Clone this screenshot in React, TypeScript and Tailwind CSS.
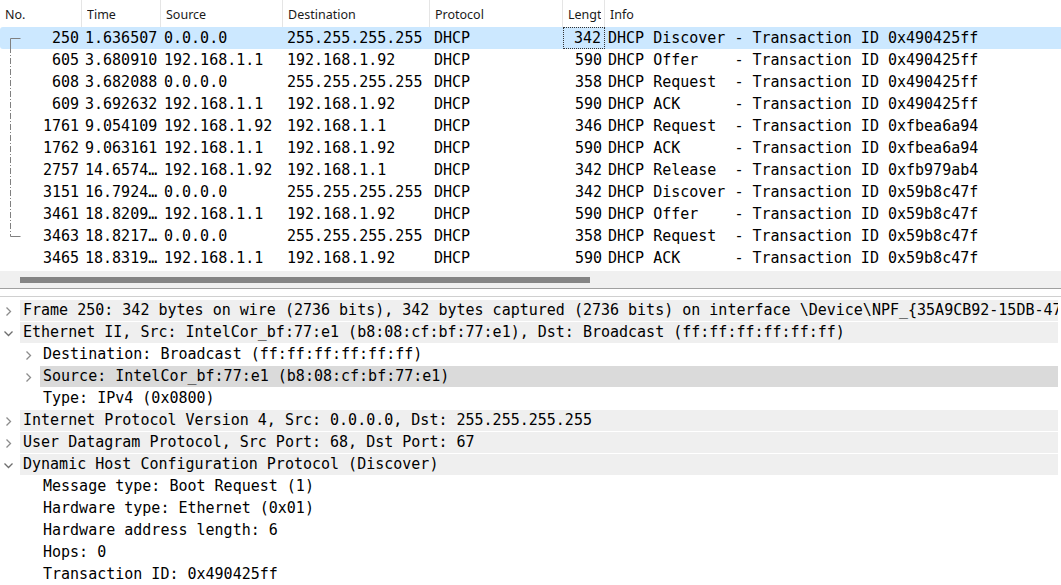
import React from 'react';

const COLS = 'grid grid-cols-[82px_79px_122px_147px_133px_42px_1fr]';

const PACKETS = [
  ['250', '1.636507', '0.0.0.0', '255.255.255.255', '342', 'Discover', '0x490425ff'],
  ['605', '3.680910', '192.168.1.1', '192.168.1.92', '590', 'Offer', '0x490425ff'],
  ['608', '3.682088', '0.0.0.0', '255.255.255.255', '358', 'Request', '0x490425ff'],
  ['609', '3.692632', '192.168.1.1', '192.168.1.92', '590', 'ACK', '0x490425ff'],
  ['1761', '9.054109', '192.168.1.92', '192.168.1.1', '346', 'Request', '0xfbea6a94'],
  ['1762', '9.063161', '192.168.1.1', '192.168.1.92', '590', 'ACK', '0xfbea6a94'],
  ['2757', '14.6574…', '192.168.1.92', '192.168.1.1', '342', 'Release', '0xfb979ab4'],
  ['3151', '16.7924…', '0.0.0.0', '255.255.255.255', '342', 'Discover', '0x59b8c47f'],
  ['3461', '18.8209…', '192.168.1.1', '192.168.1.92', '590', 'Offer', '0x59b8c47f'],
  ['3463', '18.8217…', '0.0.0.0', '255.255.255.255', '358', 'Request', '0x59b8c47f'],
  ['3465', '18.8319…', '192.168.1.1', '192.168.1.92', '590', 'ACK', '0x59b8c47f'],
];

// level 0 = top protocol row, 1 = child. arrow: 'r' | 'd' | null
type Node = { text: string; level: 0 | 1; arrow: 'r' | 'd' | null; sel?: boolean };

const DETAILS: Node[] = [
  { text: 'Frame 250: 342 bytes on wire (2736 bits), 342 bytes captured (2736 bits) on interface \\Device\\NPF_{35A9CB92-15DB-47E1-9A2D-1B4C7F0E3A21}, id 0', level: 0, arrow: 'r' },
  { text: 'Ethernet II, Src: IntelCor_bf:77:e1 (b8:08:cf:bf:77:e1), Dst: Broadcast (ff:ff:ff:ff:ff:ff)', level: 0, arrow: 'd' },
  { text: 'Destination: Broadcast (ff:ff:ff:ff:ff:ff)', level: 1, arrow: 'r' },
  { text: 'Source: IntelCor_bf:77:e1 (b8:08:cf:bf:77:e1)', level: 1, arrow: 'r', sel: true },
  { text: 'Type: IPv4 (0x0800)', level: 1, arrow: null },
  { text: 'Internet Protocol Version 4, Src: 0.0.0.0, Dst: 255.255.255.255', level: 0, arrow: 'r' },
  { text: 'User Datagram Protocol, Src Port: 68, Dst Port: 67', level: 0, arrow: 'r' },
  { text: 'Dynamic Host Configuration Protocol (Discover)', level: 0, arrow: 'd' },
  { text: 'Message type: Boot Request (1)', level: 1, arrow: null },
  { text: 'Hardware type: Ethernet (0x01)', level: 1, arrow: null },
  { text: 'Hardware address length: 6', level: 1, arrow: null },
  { text: 'Hops: 0', level: 1, arrow: null },
  { text: 'Transaction ID: 0x490425ff', level: 1, arrow: null },
];

const Chevron = ({ dir }: { dir: 'r' | 'd' }) =>
  dir === 'r' ? (
    <svg width="7" height="11" viewBox="0 0 7 11" className="block">
      <path d="M1.5 1.5 L5.5 5.5 L1.5 9.5" fill="none" stroke="#8c8c8c" strokeWidth="1.3" />
    </svg>
  ) : (
    <svg width="11" height="7" viewBox="0 0 11 7" className="block">
      <path d="M1.5 1.5 L5.5 5.5 L9.5 1.5" fill="none" stroke="#6e6e6e" strokeWidth="1.3" />
    </svg>
  );

const HEADERS = ['No.', 'Time', 'Source', 'Destination', 'Protocol', 'Length', 'Info'];

export default function App() {
  return (
    <div className="w-[1061px] h-[585px] overflow-hidden bg-white text-black">
      {/* packet list header */}
      <div className={`${COLS} h-[27px] font-['Noto_Sans',sans-serif] text-[12.5px] text-[#1a1a1a]`}>
        {HEADERS.map((h, i) => (
          <div key={h} className={`flex items-center pt-[3px] pl-[5px] border-[#e5e5e5] ${i < 6 ? 'border-r' : ''}`}>
            <span className={`block overflow-hidden whitespace-nowrap ${i === 5 ? 'w-[33px]' : ''}`}>{h}</span>
          </div>
        ))}
      </div>

      {/* packet rows */}
      <div className="relative font-['DejaVu_Sans_Mono',monospace] text-[15px] leading-[22px]">
        {PACKETS.map((p, i) => (
          <div key={p[0]} className={`${COLS} h-[22px] whitespace-pre ${i === 0 ? 'bg-[#cce8ff] rounded-l-[3px]' : ''}`}>
            <div className="text-right pr-[3px]">{p[0]}</div>
            <div className="pl-[3px] overflow-hidden">{p[1]}</div>
            <div className="pl-[3px] overflow-hidden">{p[2]}</div>
            <div className="pl-[4px] overflow-hidden">{p[3]}</div>
            <div className="pl-[4px]">DHCP</div>
            <div className={`text-right pr-[3px] ${i === 0 ? 'border border-dotted border-[#333] leading-[20px]' : ''}`}>{p[4]}</div>
            <div className="pl-[3px] overflow-hidden">{`DHCP ${p[5].padEnd(8)} - Transaction ID ${p[6]}`}</div>
          </div>
        ))}
        {/* conversation bracket */}
        <svg className="absolute left-0 top-0" width="24" height="242">
          <path d="M20.5 11.5 H10.5 V20" fill="none" stroke="#808080" strokeWidth="1" />
          <path d="M10.5 20 V209" fill="none" stroke="#808080" strokeWidth="1" strokeDasharray="6 2 1 2" />
          <path d="M10.5 209 V209.5 H20.5" fill="none" stroke="#808080" strokeWidth="1" />
        </svg>
      </div>

      {/* horizontal scrollbar */}
      <div className="mt-[2px] h-[17px] bg-[#f0f0f0] flex items-center">
        <div className="ml-[20px] w-[570px] h-[6px] bg-[#858585]" />
      </div>

      {/* splitter */}
      <div className="h-[9px] border-t border-b border-t-[#a0a0a0] border-b-[#d0d0d0]" />

      {/* packet details */}
      <div className="w-[1058px] pt-[3px] overflow-hidden font-['DejaVu_Sans_Mono',monospace] text-[15px] leading-[22px]">
        {DETAILS.map((d, i) => (
          <div key={i} className="flex h-[22px] items-stretch">
            <div className={`${d.level === 0 ? 'w-[20px]' : 'w-[40px]'} shrink-0 flex items-center justify-end ${d.arrow === 'd' ? 'pr-[6px]' : 'pr-[8px]'}`}>
              {d.arrow && <Chevron dir={d.arrow} />}
            </div>
            <div
              className={`flex-1 whitespace-pre overflow-hidden mb-px leading-[21px] ${
                d.level === 0 ? 'bg-[#efefef] pl-[3px]' : d.sel ? 'bg-[#dadada] pl-[3px]' : 'pl-[3px]'
              }`}
            >
              {d.text}
            </div>
          </div>
        ))}
      </div>
    </div>
  );
}
